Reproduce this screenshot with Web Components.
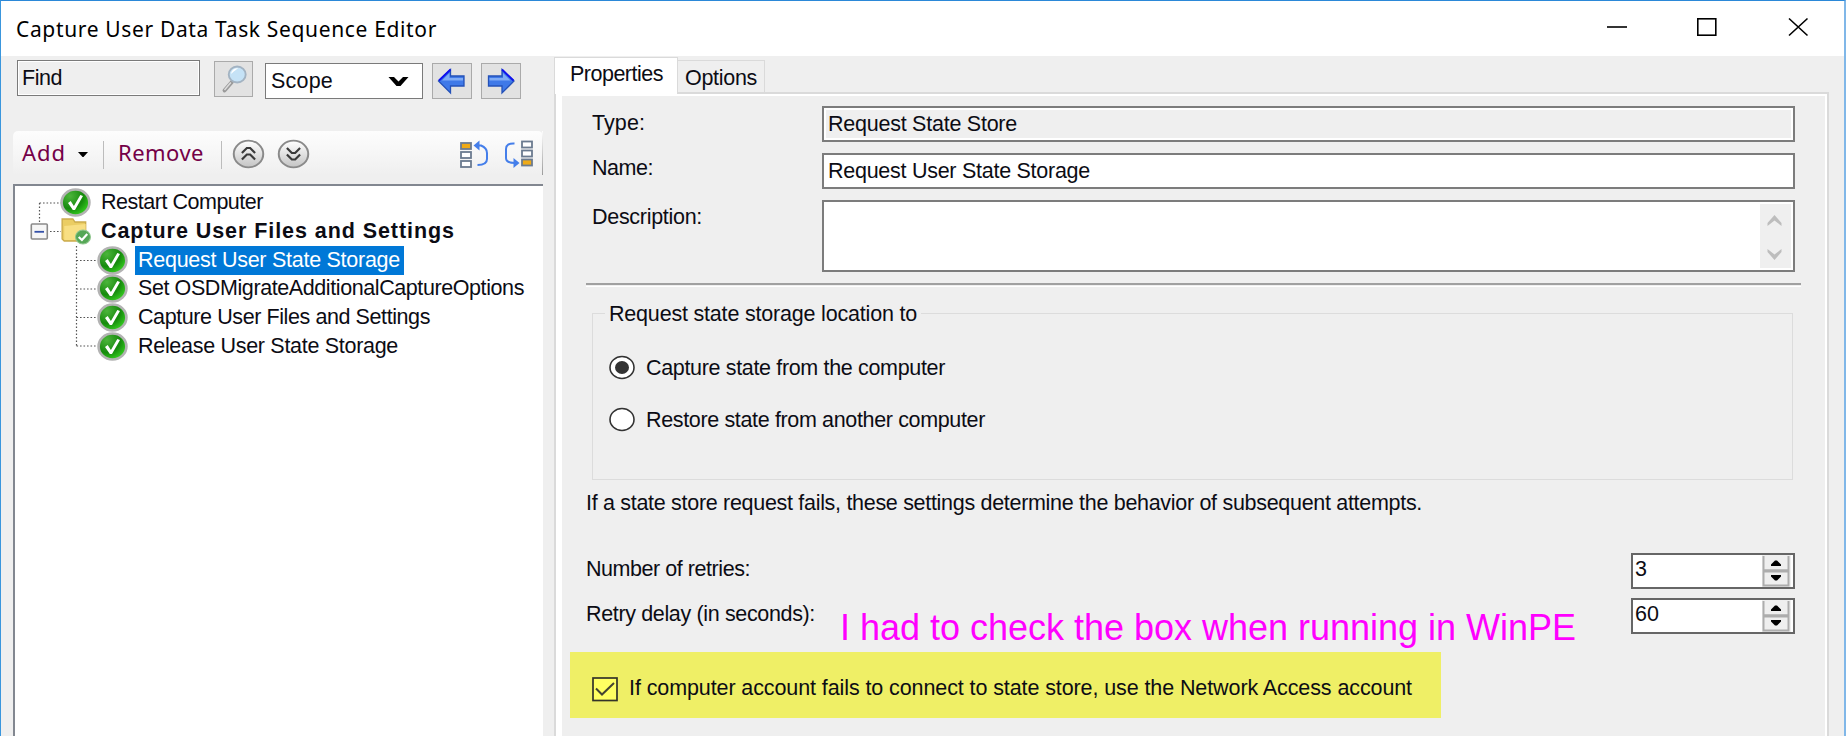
<!DOCTYPE html>
<html lang="en">
<head>
<meta charset="utf-8">
<title>Capture User Data Task Sequence Editor</title>
<style>
html,body{margin:0;height:736px;overflow:hidden}
body{font:21.5px "Liberation Sans",Arial,sans-serif;color:#0c0c14;background:#efefef}
</style>
</head>
<body>
<editor-window></editor-window>
<script>
function define(name, html, setup) {
  const t = document.createElement('template');
  t.innerHTML = html;
  customElements.define(name, class extends HTMLElement {
    connectedCallback() {
      if (this.shadowRoot) return;
      this.attachShadow({mode: 'open'}).append(t.content.cloneNode(true));
      if (setup) setup(this, this.shadowRoot);
    }
  });
}

define('editor-window', `
<style>
:host{display:flex;flex-direction:column;box-sizing:border-box;width:1846px;height:736px;border:solid;border-width:1px 2px 0 1px;border-color:#2b88d8 #80b7e8 #2b88d8 #3a96dd;background:#efefef}
main{display:grid;grid-template-columns:553px 1fr;height:680px}
</style>
<title-bar></title-bar>
<main><sequence-pane></sequence-pane><property-pane></property-pane></main>`);

define('title-bar', `
<style>
:host{display:flex;justify-content:space-between;height:55px;background:#fff;font:21px "Noto Sans","Open Sans",sans-serif;color:#000}
fit-text{margin:14px 0 0 15px}
svg{width:240px;height:55px}
</style>
<fit-text w="421">Capture User Data Task Sequence Editor</fit-text>
<svg viewBox="1604 1 240 55" fill="none" stroke="#000" stroke-width="1.6"><path d="M1607 27H1627"/><rect x="1697.8" y="18.8" width="18" height="16.4"/><path d="M1789 18.5L1807.500 35.500M1807.500 18.500L1789 35.500"/></svg>`);

define('sequence-pane', `
<style>
:host{display:flex;flex-direction:column;padding-left:12px}
find-bar{margin-left:4px}
tool-strip{margin-top:32px}
tree-view{margin-top:9px;flex:1}
</style>
<find-bar></find-bar><tool-strip></tool-strip><tree-view></tree-view>`);

define('find-bar', `
<style>
:host{display:flex;align-items:flex-start;height:43px}
.find,.scope{box-sizing:border-box;border:1.6px solid #7a7a7a;height:36px;flex:none}
.find{width:183px;margin-top:4px;padding:3px 0 0 4px;box-shadow:inset 0 0 0 1px #fff}
.scope{width:158px;margin:7px 9px 0 12px;background:#fff;display:flex;justify-content:space-between;padding:3px 12px 0 5px}
.scope svg{margin-top:9px}
icon-button{margin-top:7px}
icon-button.s{margin:5px 0 0 14px}
icon-button+icon-button{margin-left:9px}
</style>
<div class="find"><fit-text w="40">Find</fit-text></div>
<icon-button class="s"><svg width="35" height="32" viewBox="0 0 33 32" preserveAspectRatio="none"><path d="M8 27.500L15 19" stroke="#999" stroke-width="3.600" stroke-linecap="round"/><path d="M8 27L14 19.500" stroke="#ddd" stroke-width="1.300"/><ellipse cx="20" cy="11.500" rx="8" ry="8" fill="#c5e2f6" stroke="#a3b3c2" stroke-width="1.800"/><path d="M14 11Q15 5 21 5Q16 9 14 11" fill="#fff"/></svg></icon-button>
<div class="scope"><fit-text w="62">Scope</fit-text><svg width="23" height="12" viewBox="0 0 22 12"><path d="M1 1H6.500L11 5.500L15.500 1H21L13 10H9Z" fill="#000"/></svg></div>
<icon-button><svg width="36" height="32" viewBox="0 0 36 32"><path d="M4.500 16L16.500 4.500V11H30V21H16.500V28Z" fill="#3f79e8" stroke="#2451b8" stroke-width="1.300"/><path d="M8 15.500L15.500 8V13H29V15.500Z" fill="#80acf5"/><path d="M5 15.500L16.500 4.500" stroke="#1010f0" stroke-width="1.800"/></svg></icon-button>
<icon-button><svg width="36" height="32" viewBox="0 0 36 32"><path d="M31 16L19 4.500V11H5.500V21H19V28Z" fill="#3f79e8" stroke="#2451b8" stroke-width="1.300"/><path d="M27.500 15.500L20 8V13H6.500V15.500Z" fill="#80acf5"/><path d="M30.500 15.500L19 4.500" stroke="#1010f0" stroke-width="1.800"/></svg></icon-button>`);

define('icon-button', `
<style>:host{box-sizing:border-box;display:flex;flex:none;align-items:center;justify-content:center;width:40px;height:36px;border:1.5px solid #aaa;background:#e2e2e2;overflow:hidden}:host(.s){width:39px}</style><slot></slot>`);

define('tool-strip', `
<style>
:host{box-sizing:border-box;display:flex;align-items:flex-start;width:530px;height:44px;padding-top:9px;border-radius:5px 5px 0 0;background:linear-gradient(#fdfdfd,#f7f7f7 45%,#efefef);color:#740047;font-family:"Noto Sans","Open Sans",sans-serif;font-size:22px;border-right:1.600px solid;border-image:linear-gradient(#fff,#999) 1}
i{width:1px;height:28px;background:#bcbcbc;margin-top:1px}
.c{width:33px;height:30px}
svg{flex:none}
</style>
<fit-text w="44" style="margin:-2px 0 0 9px">Add</fit-text>
<svg width="12" height="7" viewBox="0 0 12 7" style="margin:11px 14px 0 11px"><path d="M1 1H11L6.500 6H5.500Z" fill="#000"/></svg>
<i></i><fit-text w="86" style="margin:-2px 0 0 14px">Remove</fit-text><i style="margin-left:17px"></i>
<svg class="c" viewBox="0 0 30 30" preserveAspectRatio="none" style="margin:-1px 0 0 10px"><defs><linearGradient id="g" x2="0" y2="1"><stop stop-color="#fff"/><stop offset="1" stop-color="#c4c4c4"/></linearGradient></defs><circle cx="15" cy="15" r="13.400" fill="url(#g)" stroke="#8a8a8a" stroke-width="1.800"/><path d="M9 14L13.500 9H16.500L21 14M9 20.500L13.500 15.500H16.500L21 20.500" fill="none" stroke="#3a3a3a" stroke-width="1.900"/></svg>
<svg class="c" viewBox="0 0 30 30" preserveAspectRatio="none" style="margin:-1px 0 0 12px"><circle cx="15" cy="15" r="13.400" fill="url(#g)" stroke="#8a8a8a" stroke-width="1.800"/><path d="M9 9L13.500 14H16.500L21 9M9 15.500L13.500 20.500H16.500L21 15.500" fill="none" stroke="#3a3a3a" stroke-width="1.900"/></svg>
<svg width="77" height="32" viewBox="458 137 77 32" style="margin:-1px 0 0 auto;padding-right:7px" fill="#fff" stroke="#6b7b90" stroke-width="1.800">
<rect x="461" y="141" width="10" height="6" fill="#efaa16"/><rect x="461" y="150" width="10" height="6"/><rect x="461" y="159" width="10" height="6"/>
<rect x="522" y="139.500" width="10" height="6"/><rect x="522" y="148.500" width="10" height="6"/><rect x="522" y="157.500" width="10" height="6" fill="#efaa16"/>
<path d="M476 143.500H481Q487 146 487 151V157Q487 163 477.500 163" fill="none" stroke="#447eea" stroke-width="2"/><path d="M473.500 143.500L479.500 138.500V148.500Z" fill="#447eea" stroke="none"/>
<path d="M514.500 141.500Q506 141 506 147V156Q506 161 515 161" fill="none" stroke="#447eea" stroke-width="2"/><path d="M519.500 161L513.500 156V166Z" fill="#447eea" stroke="none"/></svg>`);

define('tree-view', `
<style>
:host{box-sizing:border-box;display:flex;flex-direction:column;width:530px;border:solid #828790;border-width:2px 0 0 2px;background:#fff;padding-top:2px;position:relative}
svg.lines{position:absolute;left:0;top:0}
</style>
<svg class="lines" width="90" height="170" viewBox="15 186 90 170" fill="none" stroke="#555" stroke-width="1.200"><path d="M39.500 203H61M39.500 203V223M50 231.500H61M76.500 246V346M76.500 260.500H97M76.500 289H97M76.500 317.500H97M76.500 346H97" stroke-dasharray="1.600 1.900"/><rect x="31.300" y="224" width="16" height="15" rx="1" fill="#f6f6f6" stroke="#8a8a8a" stroke-width="1.600"/><path d="M34.500 231.800H44" stroke="#3350a8" stroke-width="1.800"/></svg>
<tree-item style="--x:45px;--t:9px"><fit-text w="162">Restart Computer</fit-text></tree-item>
<tree-item folder style="--x:45px;--t:9px;font-weight:bold"><fit-text w="354">Capture User Files and Settings</fit-text></tree-item>
<tree-item selected><fit-text w="262">Request User State Storage</fit-text></tree-item>
<tree-item><fit-text w="386">Set OSDMigrateAdditionalCaptureOptions</fit-text></tree-item>
<tree-item><fit-text w="292">Capture User Files and Settings</fit-text></tree-item>
<tree-item><fit-text w="260">Release User State Storage</fit-text></tree-item>`);

define('tree-item', `
<style>
:host{display:flex;align-items:center;height:28.800px;padding-left:var(--x,82px);position:relative}
svg{flex:none;width:31px;height:29px}
.f{display:none}:host([folder]) .f{display:block}:host([folder]) .k{display:none}
div{box-sizing:border-box;height:29px;margin-left:7px;padding:0 4px 0 3px}
:host([selected]) div{background:#0078d7;color:#fff}
</style>
<svg class="k" viewBox="0 0 29 29" preserveAspectRatio="none"><defs><radialGradient id="g" cx=".3" cy=".25" r=".8"><stop stop-color="#4cb53b"/><stop offset=".6" stop-color="#168a0d"/><stop offset="1" stop-color="#36cf20"/></radialGradient></defs><circle cx="14.500" cy="14.500" r="13" fill="url(#g)" stroke="#b3b3b3" stroke-width="2.500"/><path d="M7.500 15L10 13L13 18L19 7L21.500 8L14 22H12Z" fill="#fff"/></svg>
<svg class="f" viewBox="0 0 29 29" preserveAspectRatio="none"><path d="M2 2H12L14 5H24V24H4L2 22Z" fill="#ebcd63" stroke="#ccac4d" stroke-width="1.300"/><path d="M4 9L24 7V23H4Z" fill="#f8df83"/><circle cx="21.500" cy="20" r="7" fill="#55a756" stroke="#90c68e"/><path d="M17.500 20L20.500 23L25.500 17" fill="none" stroke="#fff" stroke-width="2"/></svg>
<div><slot></slot></div>`);

define('property-pane', `
<style>
:host{display:flex;flex-direction:column;width:1275px;height:680px}
nav{display:flex;align-items:flex-end;height:36px}
.tab{box-sizing:border-box;border:1.600px solid #dadada;border-bottom:0}
.on{width:124px;height:37px;background:#fff;padding:2px 0 0 15px;margin-bottom:-2px;z-index:1}
.off{width:87px;height:32px;border-left:0;padding:3px 0 0 7px}
section{flex:1;box-sizing:border-box;border:solid #dadada;border-width:2px 2px 0;box-shadow:inset 6px 0 #fff,inset 0 2px #fff,inset -2px 0 #fff;padding:12px 0 0 30px;display:flex;flex-direction:column;align-items:flex-start;overflow:hidden}
.row{display:grid;grid-template-columns:230px 973px;margin-left:6px;align-items:start}
.box{box-sizing:border-box;height:36px;border:2px solid #7c7c7c;background:#fff;padding:2px 0 0 4px}
.ro{background:#efefef;box-shadow:inset 0 0 0 2px #fff}
.desc{height:72px;display:flex;justify-content:flex-end;padding:2px 2px 2px 0}
.scroll{width:31px;background:#efefef}
hr{box-sizing:border-box;width:1215px;height:4px;margin:11px 0 0;border:0;border-top:2px solid #a0a0a0;border-bottom:1px solid #fff}
fieldset{box-sizing:border-box;width:1201px;height:181px;margin:12px 0 0 6px;padding:27px 0 0 16px;border:1.600px solid #dcdcdc;display:block}
legend{padding:0 4px;margin-left:-4px;height:28px}
legend fit-text{position:relative;top:1px}
.num{display:flex;justify-content:space-between;width:1209px;height:36px}
.line{position:relative}
.note{position:absolute;left:254px;top:9px;font-size:36px;line-height:42px;color:#f0f}
.hi{display:flex;box-sizing:border-box;width:871px;height:66px;background:#efef66;margin:18px 0 0 -16px;padding:22px 0 0 22px}
.hi svg{margin:3px 11px 0 0}
</style>
<nav><div class="tab on"><fit-text w="93">Properties</fit-text></div><div class="tab off"><fit-text w="72">Options</fit-text></div></nav>
<section>
<div class="row"><fit-text w="53" style="margin-top:3px">Type:</fit-text><div class="box ro"><fit-text w="189">Request State Store</fit-text></div></div>
<div class="row" style="margin-top:11px"><fit-text w="61" style="margin-top:1px">Name:</fit-text><div class="box"><fit-text w="262">Request User State Storage</fit-text></div></div>
<div class="row" style="margin-top:11px"><fit-text w="110" style="margin-top:3px">Description:</fit-text><div class="box desc"><div class="scroll"><svg width="31" height="64" viewBox="0 0 31 64"><path d="M7.500 19L14.500 11L21.500 19V22L14.500 16.500L7.500 22ZM7.500 45V48L14.500 56L21.500 48V45L14.500 50.500Z" fill="#bdbdbd"/></svg></div></div></div>
<hr>
<fieldset><legend><fit-text w="308">Request state storage location to</fit-text></legend>
<radio-option checked><fit-text w="299">Capture state from the computer</fit-text></radio-option>
<radio-option style="margin-top:24px"><fit-text w="339">Restore state from another computer</fit-text></radio-option></fieldset>
<fit-text w="836" style="margin:9px 0 0">If a state store request fails, these settings determine the behavior of subsequent attempts.</fit-text>
<div class="num" style="margin-top:36px"><fit-text w="164" style="margin:2px 0 0">Number of retries:</fit-text><number-spinner><fit-text w="12">3</fit-text></number-spinner></div>
<div class="num line" style="margin-top:9px"><fit-text w="229" style="margin:2px 0 0">Retry delay (in seconds):</fit-text><fit-text class="note" w="736">I had to check the box when running in WinPE</fit-text><number-spinner><fit-text w="24">60</fit-text></number-spinner></div>
<div class="hi"><svg width="26" height="25" viewBox="0 0 26 25"><rect x="1" y="1" width="24" height="22.500" fill="#ffff62" stroke="#333329" stroke-width="1.700"/><path d="M4 11.500L10 17.500L22 6" fill="none" stroke="#444432" stroke-width="2"/></svg><fit-text w="783">If computer account fails to connect to state store, use the Network Access account</fit-text></div>
</section>`);

define('radio-option', `
<style>:host{display:flex;height:28px}svg{margin-right:11px}</style>
<svg width="26" height="28" viewBox="0 0 26 28"><ellipse cx="13" cy="13.500" rx="12" ry="11" fill="#fff" stroke="#333" stroke-width="1.600"/><ellipse class="dot" cx="13" cy="13.500" rx="7" ry="6.500" fill="#333"/></svg><slot></slot>`,
(host, root) => { if (!host.hasAttribute('checked')) root.querySelector('.dot').remove(); });

define('number-spinner', `
<style>:host{box-sizing:border-box;display:flex;justify-content:space-between;width:164px;height:36px;border:2px solid #666;background:#fff;padding:0 2px}slot{display:block}</style>
<slot></slot><svg width="29" height="32" viewBox="0 0 29 32"><rect width="29" height="32" fill="#efefef"/><path d="M1.500 1V30.500H26.500V1M1 15.500H27" fill="none" stroke="#adadad" stroke-width="2"/><path d="M2 16H27" stroke="#adadad" stroke-width="3"/><path d="M9 11V9.500L13 5.500H15L19 9.500V11ZM9 20H19V21.500L15 25.500H13L9 21.500Z" fill="#000"/></svg>`);

/* Single-line label whose tracking is adjusted to a given advance width. */
define('fit-text', `
<style>:host{display:block;width:max-content;white-space:nowrap;line-height:28px;height:28px}</style><span><slot></slot></span>`,
(host, root) => {
  const span = root.querySelector('span');
  const n = host.textContent.length;
  const w = span.getBoundingClientRect().width;
  span.style.letterSpacing = (host.getAttribute('w') - w) / n + 'px';
});
</script>
</body>
</html>
